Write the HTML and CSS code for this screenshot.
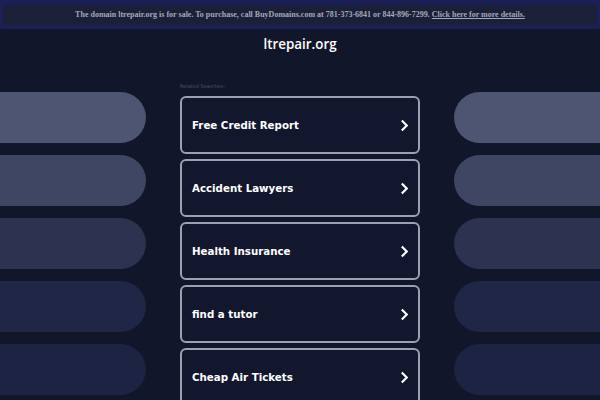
FILE: index.html
```html
<!DOCTYPE html>
<html>
<head>
<meta charset="utf-8">
<link rel="stylesheet" href="styles.css">
</head>
<body>
<div class="banner">
  <div class="banner-inner">The domain ltrepair.org is for sale. To purchase, call BuyDomains.com at 781-373-6841 or 844-896-7299. <a href="#">Click here for more details.</a></div>
</div>
<h1 class="title">ltrepair.org</h1>
<div class="main">
  <div class="side side-left">
    <div class="pill p1"></div>
    <div class="pill p2"></div>
    <div class="pill p3"></div>
    <div class="pill p4"></div>
    <div class="pill p5"></div>
  </div>
  <div class="center">
    <div class="label">Related Searches:</div>
    <a class="box" href="#"><span>Free Credit Report</span><svg class="chev" viewBox="0 0 10 14" width="9" height="13"><path d="M2 1.5 L7.5 7 L2 12.5" fill="none" stroke="#fff" stroke-width="2.4"/></svg></a>
    <a class="box" href="#"><span>Accident Lawyers</span><svg class="chev" viewBox="0 0 10 14" width="9" height="13"><path d="M2 1.5 L7.5 7 L2 12.5" fill="none" stroke="#fff" stroke-width="2.4"/></svg></a>
    <a class="box" href="#"><span>Health Insurance</span><svg class="chev" viewBox="0 0 10 14" width="9" height="13"><path d="M2 1.5 L7.5 7 L2 12.5" fill="none" stroke="#fff" stroke-width="2.4"/></svg></a>
    <a class="box" href="#"><span>find a tutor</span><svg class="chev" viewBox="0 0 10 14" width="9" height="13"><path d="M2 1.5 L7.5 7 L2 12.5" fill="none" stroke="#fff" stroke-width="2.4"/></svg></a>
    <a class="box" href="#"><span>Cheap Air Tickets</span><svg class="chev" viewBox="0 0 10 14" width="9" height="13"><path d="M2 1.5 L7.5 7 L2 12.5" fill="none" stroke="#fff" stroke-width="2.4"/></svg></a>
  </div>
  <div class="side side-right">
    <div class="pill p1"></div>
    <div class="pill p2"></div>
    <div class="pill p3"></div>
    <div class="pill p4"></div>
    <div class="pill p5"></div>
  </div>
</div>
</body>
</html>
```
FILE: styles.css
```css
html, body {
  margin: 0;
  padding: 0;
  background: #12162b;
  overflow: hidden;
  height: 400px;
}
body {
  font-family: "DejaVu Sans", sans-serif;
}
.banner {
  background: #1a1f55;
  padding: 5px 3px 4px;
}
.banner-inner {
  background: #1b2038;
  height: 20px;
  line-height: 20px;
  text-align: center;
  font-family: "Liberation Serif", serif;
  font-weight: bold;
  font-size: 8px;
  color: #a3a7ba;
  white-space: nowrap;
}
.banner-inner a {
  color: #a3a7ba;
  text-decoration: underline;
}
.title {
  margin: 0;
  padding-top: 7px;
  height: 30px;
  text-align: center;
  font-family: "Open Sans", sans-serif;
  font-weight: 600;
  font-size: 13.4px;
  color: #fff;
  line-height: 16px;
}
.main {
  display: flex;
  justify-content: center;
  gap: 34px;
  padding-top: 16px;
  height: 318px;
  overflow: hidden;
}
.side {
  flex: 0 0 146px;
  min-width: 0;
  overflow: hidden;
  display: flex;
  flex-direction: column;
  gap: 12px;
  padding-top: 10px;
}
.pill {
  flex: 0 0 51px;
  width: 200px;
  border-radius: 26px;
}
.side-left .pill {
  margin-left: -54px;
}
.p1 { background: #4d5573; }
.p2 { background: #3f4663; }
.p3 { background: #2c3250; }
.p4 { background: #202746; }
.p5 { background: #1c2343; }
.center {
  flex: 0 0 240px;
  display: flex;
  flex-direction: column;
  gap: 5px;
}
.label {
  font-size: 5px;
  color: #4f5574;
  height: 8px;
  line-height: 8px;
  margin-bottom: 1px;
}
.box {
  box-sizing: border-box;
  flex: 0 0 58px;
  border: 2px solid #9ca0b3;
  border-radius: 6px;
  background: #13172e;
  display: flex;
  align-items: center;
  justify-content: space-between;
  padding: 0 9px 0 10px;
  text-decoration: none;
  color: #fff;
  font-weight: bold;
  font-size: 10.25px;
}
.chev {
  display: block;
}
```
